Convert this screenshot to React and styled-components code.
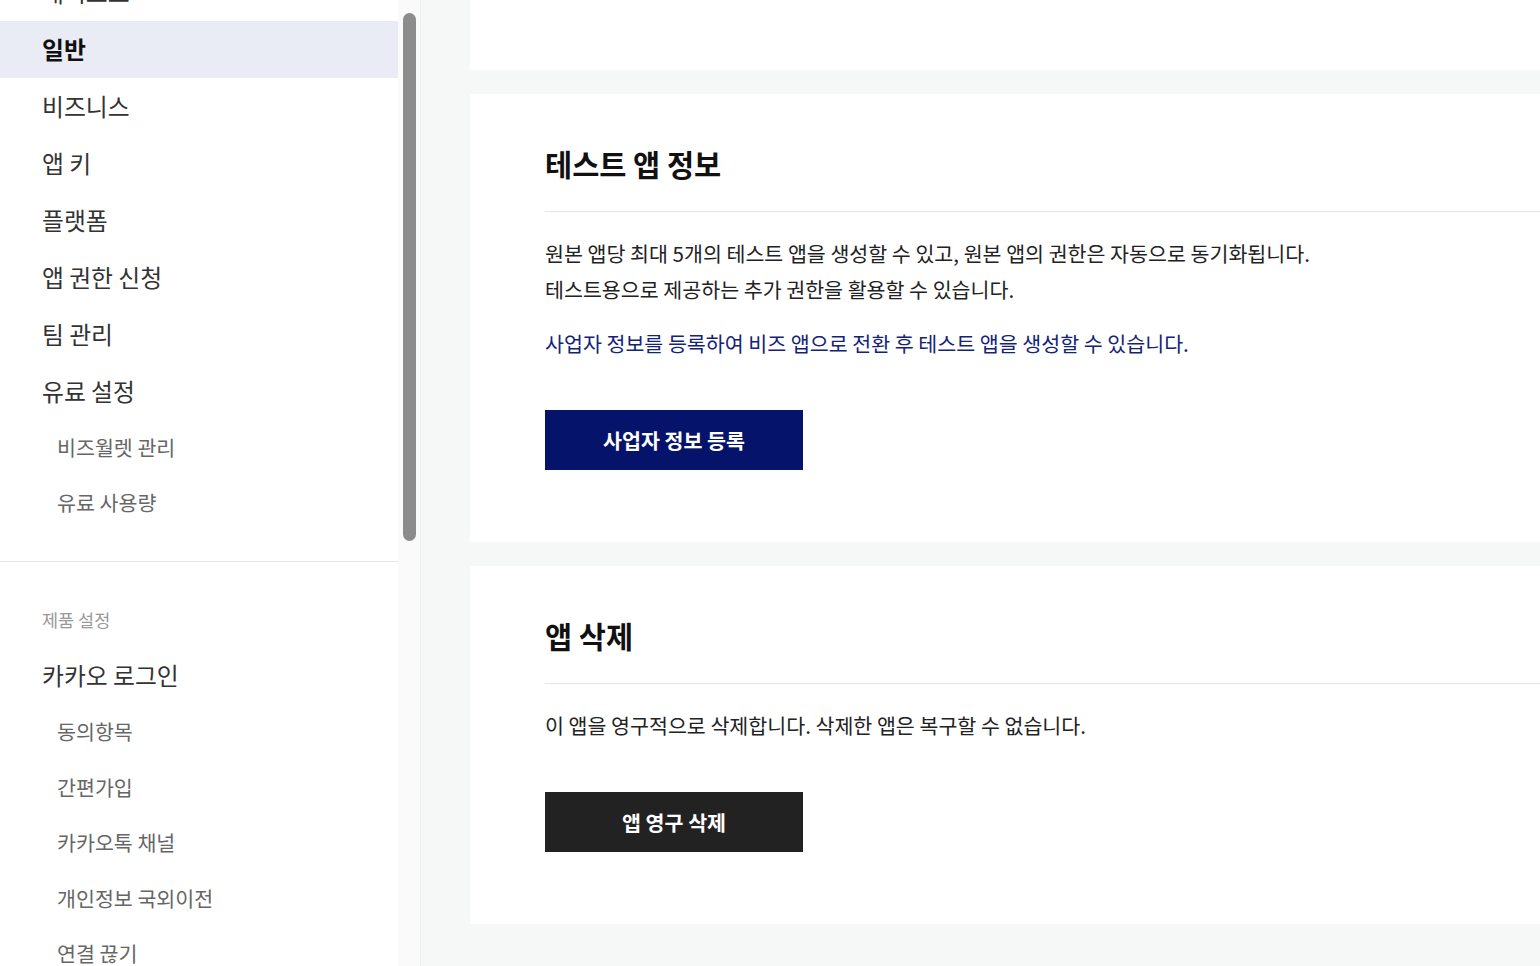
import React from 'react';
import styled, { createGlobalStyle } from "styled-components";

const GlobalStyle = createGlobalStyle`
    html, body {
        margin: 0;
        padding: 0;
        height: 966px;
        overflow: hidden;
        background: #f6f7f7;
        font-family: "Noto Sans CJK KR", "Noto Sans", sans-serif;
    }
    * { box-sizing: border-box; }
`;

const Layout = styled.div`
    display: flex;
    height: 966px;
    overflow: hidden;
`;

const Sidebar = styled.aside`
    width: 398px;
    flex-shrink: 0;
    background: #fff;
    overflow: hidden;
`;

const SideScroll = styled.div`
    margin-top: -36px;
`;

const NavList = styled.ul`
    list-style: none;
    margin: 0;
    padding: 0;
`;

const NavItem = styled.li`
    height: ${({ $sub }) => ($sub ? "55.6px" : "57px")};
    display: flex;
    align-items: center;
    padding-bottom: 2px;
    padding-left: ${({ $sub }) => ($sub ? "57px" : "42px")};
    font-size: ${({ $sub }) => ($sub ? "20.6px" : "23.8px")};
    font-weight: ${({ $active }) => ($active ? 700 : 400)};
    color: ${({ $sub, $active }) => ($active ? "#111" : $sub ? "#666" : "#333")};
    background: ${({ $active }) => ($active ? "#e9ecf4" : "transparent")};
    cursor: pointer;
    white-space: nowrap;
`;

const NavGroup = styled.div`
    padding-bottom: 30px;
    border-bottom: ${({ $divider }) => ($divider ? "1px solid #e5e5e5" : "none")};
`;

const GroupLabel = styled.div`
    padding: 46px 0 15px 42px;
    font-size: 17.5px;
    line-height: 24px;
    color: #999;
`;

const ScrollTrack = styled.div`
    width: 23px;
    flex-shrink: 0;
    background: #fafafa;
    border-right: 1px solid #eeefef;
    padding: 13px 0 0 5px;
`;

const ScrollThumb = styled.div`
    width: 13px;
    height: 528px;
    border-radius: 7px;
    background: #8c8c8c;
`;

const Main = styled.main`
    flex: 1;
    min-width: 0;
    overflow: hidden;
    padding-left: 49px;
    display: flex;
    flex-direction: column;
    gap: 24px;
`;

const Card = styled.section`
    width: 1200px;
    flex-shrink: 0;
    background: #fff;
    padding: ${({ $empty }) => ($empty ? "0" : "49px 0 72px 75px")};
    height: ${({ $empty }) => ($empty ? "70px" : "auto")};
`;

const CardTitle = styled.h2`
    margin: 0;
    font-size: 29.5px;
    line-height: 40px;
    font-weight: 700;
    color: #111;
`;

const Divider = styled.hr`
    margin: 28px 0 23px;
    border: none;
    border-top: 1px solid #e5e5e5;
`;

const Text = styled.p`
    margin: 0;
    font-size: 20.6px;
    line-height: 36px;
    color: ${({ $link }) => ($link ? "#13237a" : "#222")};
    margin-top: ${({ $link }) => ($link ? "18px" : "0")};
    white-space: nowrap;
`;

const ActionButton = styled.button`
    display: block;
    margin-top: 49px;
    width: 258px;
    height: 60px;
    border: none;
    border-radius: 0;
    background: ${({ $variant }) => ($variant === "danger" ? "#222" : "#05146a")};
    color: #fff;
    font-family: inherit;
    font-size: 20.6px;
    font-weight: 700;
    cursor: pointer;
`;

const mainMenu = [
    { id: "dashboard", label: "대시보드" },
    { id: "general", label: "일반", active: true },
    { id: "business", label: "비즈니스" },
    { id: "appkey", label: "앱 키" },
    { id: "platform", label: "플랫폼" },
    { id: "permission", label: "앱 권한 신청" },
    { id: "team", label: "팀 관리" },
    { id: "paid", label: "유료 설정" },
    { id: "bizwallet", label: "비즈월렛 관리", sub: true },
    { id: "usage", label: "유료 사용량", sub: true },
];

const productMenu = [
    { id: "login", label: "카카오 로그인" },
    { id: "consent", label: "동의항목", sub: true },
    { id: "signup", label: "간편가입", sub: true },
    { id: "channel", label: "카카오톡 채널", sub: true },
    { id: "transfer", label: "개인정보 국외이전", sub: true },
    { id: "unlink", label: "연결 끊기", sub: true },
];

function renderItems(items) {
    return items.map(({ id, label, sub, active }) => (
        <NavItem key={id} $sub={sub} $active={active}>
            {label}
        </NavItem>
    ));
}

export default function App() {
    return (
        <>
            <GlobalStyle />
            <Layout>
                <Sidebar>
                    <SideScroll>
                        <NavGroup $divider>
                            <NavList>{renderItems(mainMenu)}</NavList>
                        </NavGroup>
                        <NavGroup>
                            <GroupLabel>제품 설정</GroupLabel>
                            <NavList>{renderItems(productMenu)}</NavList>
                        </NavGroup>
                    </SideScroll>
                </Sidebar>
                <ScrollTrack>
                    <ScrollThumb />
                </ScrollTrack>
                <Main>
                    <Card $empty />
                    <Card>
                        <CardTitle>테스트 앱 정보</CardTitle>
                        <Divider />
                        <Text>원본 앱당 최대 5개의 테스트 앱을 생성할 수 있고, 원본 앱의 권한은 자동으로 동기화됩니다.</Text>
                        <Text>테스트용으로 제공하는 추가 권한을 활용할 수 있습니다.</Text>
                        <Text $link>사업자 정보를 등록하여 비즈 앱으로 전환 후 테스트 앱을 생성할 수 있습니다.</Text>
                        <ActionButton>사업자 정보 등록</ActionButton>
                    </Card>
                    <Card>
                        <CardTitle>앱 삭제</CardTitle>
                        <Divider />
                        <Text>이 앱을 영구적으로 삭제합니다. 삭제한 앱은 복구할 수 없습니다.</Text>
                        <ActionButton $variant="danger">앱 영구 삭제</ActionButton>
                    </Card>
                </Main>
            </Layout>
        </>
    );
}
